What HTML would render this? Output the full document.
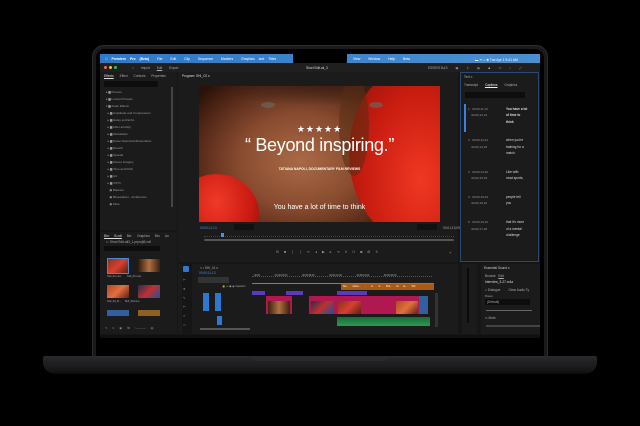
<!DOCTYPE html>
<html><head><meta charset="utf-8"><style>
*{margin:0;padding:0;box-sizing:border-box}
body{width:640px;height:426px;background:#000;position:relative;overflow:hidden;font-family:"Liberation Sans",sans-serif;color:#bbb}
.a{position:absolute}
.t{font-size:3.2px;color:#aaa;white-space:nowrap}
</style></head><body>
<!-- base -->
<div class="a" style="left:43px;top:356px;width:554px;height:18px;border-radius:2px 2px 12px 12px;background:linear-gradient(#2a2a2c,#1e1e20 50%,#141415 85%,#0a0a0a)"></div>
<div class="a" style="left:253px;top:356px;width:134px;height:5px;border-radius:0 0 4px 4px;background:#2a2a2c"></div>
<!-- lid -->
<div class="a" style="left:92px;top:45px;width:456px;height:312px;border-radius:12px 12px 2px 2px;background:#1a1a1c;border:1px solid #2c2c2e"></div>
<div class="a" style="left:96px;top:49px;width:448px;height:307px;border-radius:9px 9px 0 0;background:#000"></div>
<!-- screen -->
<div class="a" style="left:100px;top:54px;width:440px;height:284px;background:#161616;overflow:hidden">
 <div class="a" style="left:0;top:0;width:440px;height:9px;background:linear-gradient(90deg,#2f78c8,#4a90d0)"></div>
 <div class="a t" style="left:5px;top:2.5px;color:#fff;font-size:3.4px;word-spacing:3px">&#63743; <b>Premiere Pro (Beta)</b> &nbsp;File &nbsp;Edit &nbsp;Clip &nbsp;Sequence &nbsp;Markers &nbsp;Graphics and Titles</div>
 <div class="a t" style="left:253px;top:2.5px;color:#fff;font-size:3.4px;word-spacing:3px">View &nbsp;Window &nbsp;Help &nbsp;Beta</div>
 <div class="a t" style="left:375px;top:2.5px;color:#fff;font-size:3.4px">▬ ᯤ ⌕ ◉ Tue Apr 1 9:41 AM</div>
 <div class="a" style="left:193px;top:0;width:54px;height:11px;background:#000;border-radius:0 0 4px 4px"></div>
 <!-- app header -->
 <div class="a" style="left:0;top:9px;width:440px;height:9px;background:#1f1f1f"></div>
 <div class="a" style="left:4px;top:12px;width:3px;height:3px;border-radius:50%;background:#ff5f57"></div>
 <div class="a" style="left:9px;top:12px;width:3px;height:3px;border-radius:50%;background:#febc2e"></div>
 <div class="a" style="left:14px;top:12px;width:3px;height:3px;border-radius:50%;background:#28c840"></div>
 <div class="a t" style="left:32px;top:12px;word-spacing:6px">⌂ Import <u>Edit</u> Export</div>
 <div class="a t" style="left:206px;top:12px;color:#ddd">Short Edit-ali_3</div>
 <div class="a t" style="left:328px;top:12px;word-spacing:7px">ESSENTIALS ▣ ⇪ ▤ ♟ ▭ ⌕ ⤢</div>
 <!-- left effects panel -->
 <div class="a" style="left:0;top:18px;width:77px;height:158px;background:#1b1b1b"></div>
 <div class="a t" style="left:4px;top:20px;word-spacing:5px"><u style="color:#ddd">Effects</u> Effect Controls Properties</div>
 <div class="a" style="left:4px;top:27px;width:54px;height:6px;background:#0d0d0d;border-radius:1px"></div>
 <div class="a t" style="left:6px;top:35px;line-height:7px;font-size:3px;color:#999">
 ▸ ▆ Presets<br>▸ ▆ Lumetri Presets<br>▾ ▆ Audio Effects<br>&nbsp;&nbsp;▸ ▆ Amplitude and Compression<br>&nbsp;&nbsp;▸ ▆ Delay and Echo<br>&nbsp;&nbsp;▸ ▆ Filter and EQ<br>&nbsp;&nbsp;▸ ▆ Modulation<br>&nbsp;&nbsp;▸ ▆ Noise Reduction/Restoration<br>&nbsp;&nbsp;▸ ▆ Reverb<br>&nbsp;&nbsp;▸ ▆ Special<br>&nbsp;&nbsp;▸ ▆ Stereo Imagery<br>&nbsp;&nbsp;▸ ▆ Time and Pitch<br>&nbsp;&nbsp;▸ ▆ AU<br>&nbsp;&nbsp;▸ ▆ VST3<br>&nbsp;&nbsp;&nbsp;&nbsp;▣ Balance<br>&nbsp;&nbsp;&nbsp;&nbsp;▣ Binauralizer - Ambisonics<br>&nbsp;&nbsp;&nbsp;&nbsp;▣ Mute</div>
 <div class="a" style="left:71px;top:33px;width:1.5px;height:120px;background:#444"></div>
 <!-- bin panel -->
 <div class="a" style="left:0;top:178px;width:77px;height:102px;background:#1b1b1b"></div>
 <div class="a t" style="left:4px;top:180px;word-spacing:4px"><u style="color:#ddd">Bin: B-roll</u> Bin: Graphics Bin: Au</div>
 <div class="a t" style="left:6px;top:186px">▭ Short Edit-ali3_1.prproj\B-roll</div>
 <div class="a" style="left:4px;top:192px;width:56px;height:5px;background:#0d0d0d"></div>
 <div class="a" style="left:7px;top:204px;width:22px;height:16px;background:linear-gradient(135deg,#8a3020,#d84030 50%,#5a2010);border:1px solid #4a8ad0"></div>
 <div class="a" style="left:38px;top:205px;width:22px;height:13px;background:linear-gradient(90deg,#2a1a10,#b07040,#3a2010)"></div>
 <div class="a" style="left:7px;top:231px;width:22px;height:13px;background:linear-gradient(135deg,#b04a20,#e07040,#602010)"></div>
 <div class="a" style="left:38px;top:231px;width:22px;height:13px;background:linear-gradient(135deg,#203050,#c03030,#2050a0)"></div>
 <div class="a" style="left:7px;top:256px;width:22px;height:6px;background:#3060a0"></div>
 <div class="a" style="left:38px;top:256px;width:22px;height:6px;background:#906020"></div>
 <div class="a t" style="left:7px;top:221px;font-size:2.6px">SHI_01.mov &nbsp;&nbsp;&nbsp;&nbsp;&nbsp;&nbsp;&nbsp;SHI_02.mov</div>
 <div class="a t" style="left:7px;top:246px;font-size:2.6px">SHI_03_R... &nbsp;&nbsp;&nbsp;&nbsp;SHI_Women</div>
 <div class="a t" style="left:5px;top:272px;color:#888;word-spacing:4px">✎ ≡ ▣ ⇆ ○──── ▤</div>
 <!-- program panel -->
 <div class="a" style="left:78px;top:18px;width:280px;height:190px;background:#1b1b1b"></div>
 <div class="a t" style="left:82px;top:20px;color:#ddd">Program: SHI_C0 ≡</div>
 <div class="a" style="left:99px;top:32px;width:241px;height:136px;overflow:hidden;background:radial-gradient(ellipse 55% 75% at 42% 55%,#a86a45,#8a4c30 45%,#5a2c1a 75%,#2a1208)">
  <div class="a" style="left:0;top:-30px;width:241px;height:50px;border-radius:50%;background:radial-gradient(ellipse,#3a1e12,rgba(40,20,10,0) 70%)"></div>
  <div class="a" style="left:150px;top:-20px;width:130px;height:175px;border-radius:50% 40% 40% 50%;background:radial-gradient(ellipse at 55% 65%,#f03822,#c81c10 55%,#8a1008)"></div>
  <div class="a" style="left:140px;top:-10px;width:30px;height:100px;border-radius:50%;background:rgba(90,45,20,.55)"></div>
  <div class="a" style="left:-25px;top:88px;width:85px;height:80px;border-radius:50%;background:radial-gradient(ellipse at 50% 35%,#f03a28,#c81a10 60%,#701008)"></div>
  <div class="a" style="left:62px;top:16px;width:14px;height:6px;border-radius:50%;background:#6a6a66;opacity:.6"></div>
  <div class="a" style="left:170px;top:16px;width:14px;height:6px;border-radius:50%;background:#6a6a66;opacity:.6"></div>
  <div class="a" style="left:0;top:38px;width:241px;text-align:center;color:#fff;font-size:9px;letter-spacing:1px">★★★★★</div>
  <div class="a" style="left:0;top:49px;width:241px;text-align:center;color:#fff;font-size:18px;letter-spacing:-.3px">“ Beyond inspiring.”</div>
  <div class="a" style="left:0;top:81px;width:241px;text-align:center;color:#fff;font-size:3.4px;font-weight:bold">TATIANA NAPOLI, DOCUMENTARY FILM REVIEWS</div>
  <div class="a" style="left:0;top:118px;width:241px;text-align:center;color:#fff;font-size:7px">You have a lot of time to think</div>
 </div>
 <div class="a t" style="left:100px;top:172px;color:#4a90e0">00;00;11;13</div>
 <div class="a" style="left:134px;top:170px;width:20px;height:6px;background:#111"></div>
 <div class="a" style="left:317px;top:170px;width:20px;height:6px;background:#111"></div>
 <div class="a t" style="left:343px;top:172px">00;01;13;09</div>
 <div class="a" style="left:104px;top:180px;width:250px;height:3px;border-bottom:1px dotted #444"></div>
 <div class="a" style="left:121px;top:179px;width:3px;height:4px;background:#4a90e0"></div>
 <div class="a" style="left:104px;top:185px;width:250px;height:2px;background:#555;border-radius:1px"></div>
 <div class="a t" style="left:176px;top:196px;color:#999;word-spacing:4px;font-size:3.6px">⊟ ■ ❘ ❘ ⇤ ◂ ▶ ▸ ⇥ ⊓ ⊓ ◙ ⊞ ↻</div>
 <div class="a t" style="left:349px;top:196px;font-size:4px">+</div>
 <!-- text/captions panel -->
 <div class="a" style="left:360px;top:18px;width:79px;height:190px;background:#1b1b1b;border:1px solid #2a4a70"></div>
 <div class="a t" style="left:364px;top:21px">Text ≡</div>
 <div class="a t" style="left:364px;top:29px;word-spacing:6px">Transcript <u style="color:#eee">Captions</u> Graphics</div>
 <div class="a" style="left:365px;top:38px;width:60px;height:6px;background:#0d0d0d"></div>
 <div class="a" style="left:364px;top:50px;width:1.5px;height:28px;background:#3a80e0"></div>
 <div class="a t" style="left:368px;top:52px;font-size:3px;line-height:6.3px;color:#999">
 1. &nbsp;00;00;11;13<br>&nbsp;&nbsp;&nbsp;&nbsp;00;00;12;21<br><br><br><br>
 2. &nbsp;00;00;12;21<br>&nbsp;&nbsp;&nbsp;&nbsp;00;00;14;20<br><br><br><br>
 3. &nbsp;00;00;14;20<br>&nbsp;&nbsp;&nbsp;&nbsp;00;00;15;23<br><br><br>
 4. &nbsp;00;00;15;23<br>&nbsp;&nbsp;&nbsp;&nbsp;00;00;16;16<br><br><br>
 5. &nbsp;00;00;16;16<br>&nbsp;&nbsp;&nbsp;&nbsp;00;00;17;26</div>
 <div class="a t" style="left:406px;top:52px;font-size:3.2px;line-height:6.3px;color:#ddd">
 <b>You have a lot<br>of time to<br>think</b><br><br><br>
 when you're<br>training for a<br>match.<br><br><br>
 Like with<br>most sports,<br><br><br>
 people tell<br>you<br><br><br>
 that it's more<br>of a mental<br>challenge</div>
 <!-- timeline -->
 <div class="a" style="left:78px;top:210px;width:280px;height:70px;background:#1b1b1b"></div>
 <div class="a" style="left:82px;top:210px;width:10px;height:70px;background:#161616"></div>
 <div class="a" style="left:83px;top:212px;width:6px;height:6px;background:#2f78d0;border-radius:1px"></div>
 <div class="a t" style="left:83px;top:222px;line-height:9px;color:#888">⊢<br>✥<br>✎<br>⊢<br>✐<br>▭</div>
 <div class="a t" style="left:100px;top:212px">× ▪ SHI_01 ≡</div>
 <div class="a t" style="left:99px;top:217px;color:#4a90e0">00;00;11;13</div>
 <div class="a" style="left:98px;top:223px;width:31px;height:6px;background:#333"></div>
 <div class="a" style="left:152px;top:222px;width:180px;height:1px;border-bottom:1px dotted #555"></div>
 <div class="a t" style="left:154px;top:220px;font-size:2.4px;word-spacing:14px">00;00 00;00;04;00 00;00;08;00 00;00;12;00 00;00;16;00 00;00;20;00</div>
 <div class="a" style="left:152px;top:229px;width:182px;height:1px;background:#8a8a20"></div>
 <div class="a" style="left:241px;top:230px;width:93px;height:6px;background:#a85a18"></div>
 <div class="a t" style="left:243px;top:231px;color:#fff;font-size:2.6px;word-spacing:4px">No.. when.. .. It.. It.. But.. At le.. Wh</div>
 <div class="a t" style="left:122px;top:231px;font-size:2.6px">🔒 ▭ ▣ ◉ Captions</div>
 <div class="a" style="left:152px;top:237px;width:13px;height:4px;background:#5a3ac0"></div>
 <div class="a" style="left:186px;top:237px;width:17px;height:4px;background:#5a3ac0"></div>
 <div class="a" style="left:237px;top:237px;width:30px;height:4px;background:#5a3ac0"></div>
 <div class="a" style="left:103px;top:239px;width:6px;height:18px;background:#2f78d0"></div>
 <div class="a" style="left:115px;top:239px;width:6px;height:18px;background:#2f78d0"></div>
 <div class="a" style="left:166px;top:242px;width:26px;height:18px;background:#b01850"></div>
 <div class="a" style="left:168px;top:247px;width:22px;height:13px;background:linear-gradient(90deg,#3a2010,#b07040,#3a2010)"></div>
 <div class="a" style="left:209px;top:242px;width:47px;height:18px;background:#b01850"></div>
 <div class="a" style="left:211px;top:247px;width:22px;height:13px;background:linear-gradient(135deg,#203050,#c03030,#2050a0)"></div>
 <div class="a" style="left:236px;top:242px;width:83px;height:18px;background:#b01850"></div>
 <div class="a" style="left:238px;top:247px;width:23px;height:13px;background:linear-gradient(135deg,#8a3020,#d84030,#5a2010)"></div>
 <div class="a" style="left:296px;top:247px;width:22px;height:13px;background:linear-gradient(135deg,#b04a20,#e07040,#602010)"></div>
 <div class="a" style="left:319px;top:242px;width:9px;height:18px;background:#3060a0"></div>
 <div class="a" style="left:117px;top:262px;width:5px;height:9px;background:#2f78d0"></div>
 <div class="a" style="left:237px;top:263px;width:93px;height:9px;background:linear-gradient(#1c6a3a,#2a9a50)"></div>
 <div class="a" style="left:100px;top:274px;width:50px;height:2px;background:#555"></div>
 <div class="a" style="left:335px;top:239px;width:3px;height:34px;background:#333"></div>
 <!-- meter -->
 <div class="a" style="left:362px;top:210px;width:15px;height:70px;background:#1b1b1b"></div>
 <div class="a" style="left:367px;top:214px;width:2px;height:55px;background:#0a0a0a"></div>
 <!-- essential sound -->
 <div class="a" style="left:381px;top:210px;width:59px;height:70px;background:#1b1b1b"></div>
 <div class="a t" style="left:384px;top:212px;color:#ccc">Essential Sound ≡</div>
 <div class="a t" style="left:385px;top:220px">Browse &nbsp;&nbsp;<u>Edit</u></div>
 <div class="a t" style="left:385px;top:226px;color:#ddd">Interview_3-27.m4a</div>
 <div class="a t" style="left:385px;top:234px">◖ Dialogue &nbsp;&nbsp;&nbsp;&nbsp;&nbsp;&nbsp;&nbsp;&nbsp;Clear Audio Ty</div>
 <div class="a t" style="left:385px;top:241px;font-size:2.6px">Preset</div>
 <div class="a" style="left:385px;top:245px;width:45px;height:6px;background:#0d0d0d"></div>
 <div class="a t" style="left:387px;top:246px">(Default)</div>
 <div class="a" style="left:386px;top:256px;width:46px;height:1px;background:#666"></div>
 <div class="a t" style="left:385px;top:262px">⊙ Mute</div>
 <div class="a" style="left:386px;top:271px;width:60px;height:2px;background:#444"></div>
 <div class="a" style="left:0;top:281px;width:440px;height:3px;background:#101010"></div>
</div>
</body></html>
